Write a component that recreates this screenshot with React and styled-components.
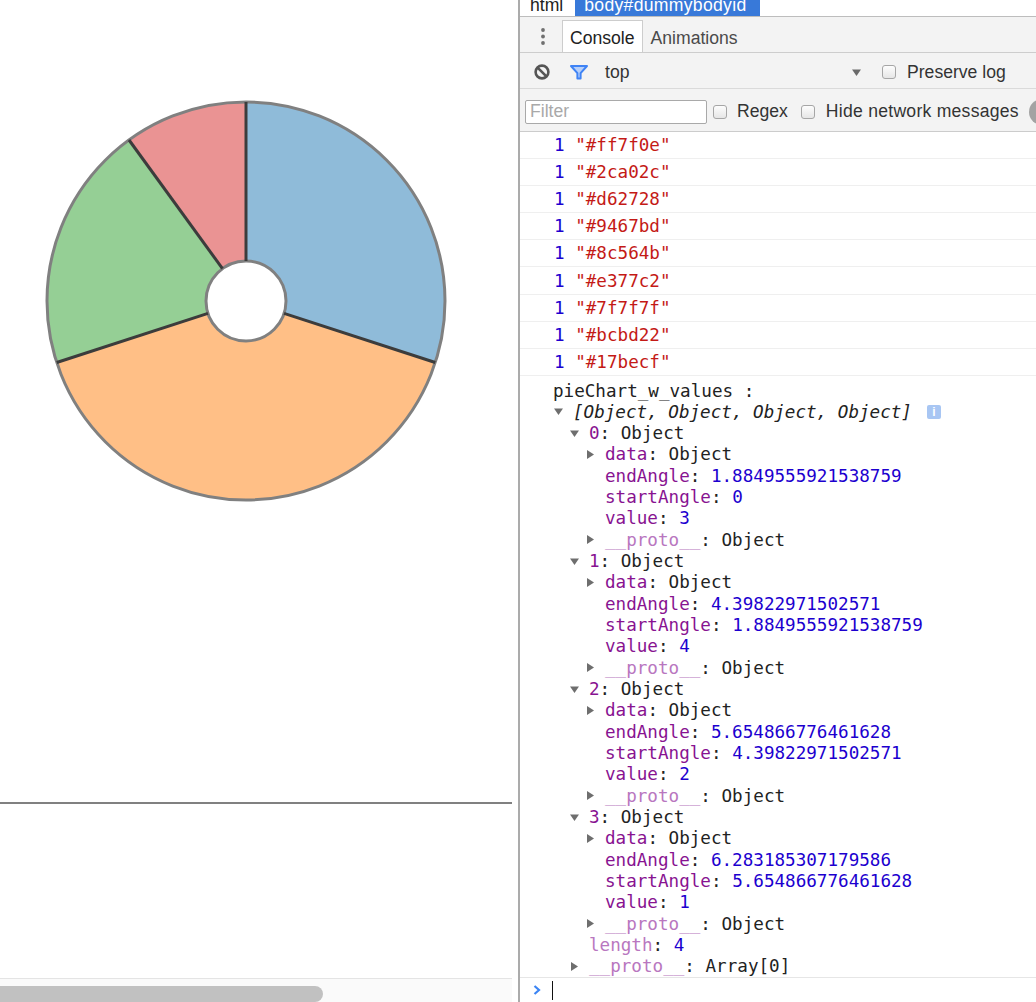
import React from 'react';
import styled, { createGlobalStyle } from 'styled-components';

const MONO = `"DejaVu Sans Mono", "Liberation Mono", monospace`;
const SANS = `"Liberation Sans", Arial, sans-serif`;

const GlobalStyle = createGlobalStyle`
  html, body {
    margin: 0;
    padding: 0;
    background: #fff;
    overflow: hidden;
  }
  body {
    font-family: ${SANS};
  }
`;

const Page = styled.div`
  display: flex;
  width: 1036px;
  height: 1002px;
  overflow: hidden;
`;

/* ---------- left: the page being inspected ---------- */

const LeftPane = styled.div`
  width: 518px;
  flex: none;
  display: flex;
  flex-direction: column;
`;

const ChartArea = styled.div`
  width: 512px;
  height: 802px;
  flex: none;
`;

const Rule = styled.div`
  width: 512px;
  height: 2px;
  background: #808080;
  flex: none;
`;

const Filler = styled.div`
  flex: 1;
`;

const HScroll = styled.div`
  width: 512px;
  height: 23px;
  border-top: 1px solid #e4e4e4;
  background: #fafafa;
  display: flex;
  align-items: flex-end;
  flex: none;
`;

const Thumb = styled.div`
  width: 323px;
  height: 16px;
  background: #c1c1c1;
  border-radius: 0 8px 8px 0;
`;

/* ---------- right: devtools ---------- */

const DevTools = styled.div`
  flex: 1;
  min-width: 0;
  border-left: 2px solid #ababab;
  display: flex;
  flex-direction: column;
  overflow: hidden;
  font-size: 17.6px;
  color: #222;
`;

const Crumbs = styled.div`
  height: 16px;
  border-bottom: 1px solid #bdbdbd;
  display: flex;
  align-items: flex-end;
  padding-left: 10px;
  overflow: hidden;
  flex: none;
`;

const Crumb = styled.span`
  height: 22px;
  line-height: 22px;
  flex: none;
  white-space: pre;
  padding: ${p => (p.$selected ? '0 13px 0 9px' : '0')};
  margin-left: ${p => (p.$selected ? '12px' : '0')};
  color: ${p => (p.$selected ? '#fff' : '#222')};
  background: ${p => (p.$selected ? '#3879d9' : 'transparent')};
  letter-spacing: ${p => (p.$selected ? '0.3px' : '0')};
`;

const TabBar = styled.div`
  height: 35px;
  background: #f3f3f3;
  border-bottom: 1px solid #cdcdcd;
  display: flex;
  align-items: flex-end;
  flex: none;
`;

const MenuButton = styled.div`
  width: 42px;
  height: 100%;
  box-sizing: border-box;
  padding: 3px 0 0 20px;
  display: flex;
  align-items: center;
`;

const Tab = styled.div`
  height: 32px;
  box-sizing: border-box;
  padding: 3px 7px 0;
  display: flex;
  align-items: center;
  border: 1px solid ${p => (p.$active ? '#cdcdcd' : 'transparent')};
  border-bottom: none;
  background: ${p => (p.$active ? '#fff' : 'transparent')};
  color: ${p => (p.$active ? '#222' : '#4a4a4a')};
`;

const Toolbar = styled.div`
  height: 36px;
  box-sizing: border-box;
  padding: 3px 0 0 13px;
  background: #f3f3f3;
  border-bottom: 1px solid #dadada;
  display: flex;
  align-items: center;
  flex: none;
  white-space: nowrap;
`;

const ContextSelect = styled.div`
  width: 256px;
  margin-left: 16px;
  display: flex;
  align-items: center;
  justify-content: space-between;
  color: #333;
`;

const FilterBar = styled.div`
  height: 43px;
  box-sizing: border-box;
  padding: 3px 0 0 5px;
  background: #f3f3f3;
  border-bottom: 1px solid #cccccc;
  display: flex;
  align-items: center;
  flex: none;
  white-space: nowrap;
`;

const FilterInput = styled.div`
  width: 182px;
  height: 24px;
  box-sizing: border-box;
  border: 1px solid #a9a9a9;
  border-radius: 2px;
  background: #fff;
  padding-left: 4px;
  display: flex;
  align-items: center;
  color: #a9a9a9;
  flex: none;
`;

const Checkbox = styled.span`
  width: 14px;
  height: 14px;
  box-sizing: border-box;
  flex: none;
  border: 1px solid #a6a6a6;
  border-radius: 3px;
  background: linear-gradient(#fdfdfd, #e6e6e6);
  margin-left: ${p => p.$gap}px;
`;

const Label = styled.span`
  margin-left: ${p => p.$gap || 11}px;
  color: #333;
  flex: none;
  letter-spacing: ${p => p.$spread || 0}px;
`;

const RoundButton = styled.span`
  width: 26px;
  height: 26px;
  border-radius: 50%;
  background: #a3a3a3;
  margin-left: 10px;
  flex: none;
  display: flex;
  align-items: center;
  justify-content: center;
  color: #fff;
  font-size: 15px;
  font-weight: bold;
`;

const Console = styled.div`
  flex: 1;
  display: flex;
  flex-direction: column;
  font-family: ${MONO};
  font-size: 17.6px;
  background: #fff;
  min-height: 0;
`;

const LogRow = styled.div`
  height: 26.1px;
  border-bottom: 1px solid #efefef;
  display: flex;
  align-items: center;
  padding-left: 34px;
  white-space: pre;
  flex: none;
`;

const TreeBlock = styled.div`
  padding-top: 4px;
  flex: none;
`;

const TreeLine = styled.div`
  height: 21.33px;
  display: flex;
  align-items: center;
  white-space: pre;
  padding-left: ${p => (p.$depth === 0 ? 33 : 34 + (p.$depth - 1) * 16)}px;
`;

const Twisty = styled.span`
  width: 19px;
  flex: none;
  display: flex;
  align-items: center;
`;

const Text = styled.span`
  color: ${p =>
    ({
      count: '#1c00cf',
      string: '#c41a16',
      number: '#1c00cf',
      key: '#881391',
      hidden: '#b977bf',
      plain: '#222',
    })[p.$kind || 'plain']};
  font-style: ${p => (p.$italic ? 'italic' : 'normal')};
`;

const InfoBadge = styled.span`
  width: 14px;
  height: 14px;
  margin-left: 15px;
  border-radius: 2px;
  background: #a8c6f3;
  color: #fff;
  font-family: ${SANS};
  font-size: 12px;
  font-weight: bold;
  display: flex;
  align-items: center;
  justify-content: center;
  flex: none;
`;

const Prompt = styled.div`
  flex: 1;
  border-top: 1px solid #e6e6e6;
  display: flex;
  align-items: center;
  padding-left: 13px;
`;

const Caret = styled.span`
  width: 1px;
  height: 19px;
  background: #111;
  margin-left: 11px;
`;

/* ---------- drawings ---------- */

const CX = 246;
const CY = 301;
const R = 199;
const R0 = 40;

const slices = [
  { start: 0, end: 1.8849555921538759, color: '#1f77b4' },
  { start: 1.8849555921538759, end: 4.39822971502571, color: '#ff7f0e' },
  { start: 4.39822971502571, end: 5.654866776461628, color: '#2ca02c' },
  { start: 5.654866776461628, end: 6.283185307179586, color: '#d62728' },
];

const px = (r, a) => CX + r * Math.sin(a);
const py = (r, a) => CY - r * Math.cos(a);
const pt = (r, a) => `${px(r, a).toFixed(2)} ${py(r, a).toFixed(2)}`;

function arcPath({ start, end }) {
  const large = end - start > Math.PI ? 1 : 0;
  return [
    `M ${pt(R, start)}`,
    `A ${R} ${R} 0 ${large} 1 ${pt(R, end)}`,
    `L ${pt(R0, end)}`,
    `A ${R0} ${R0} 0 ${large} 0 ${pt(R0, start)}`,
    'Z',
  ].join(' ');
}

function PieChart() {
  return (
    <svg width="512" height="802">
      {slices.map((s, i) => (
        <path key={i} d={arcPath(s)} fill={s.color} fillOpacity="0.5" />
      ))}
      <circle cx={CX} cy={CY} r={R} fill="none" stroke="#808080" strokeWidth="3" />
      <circle cx={CX} cy={CY} r={R0} fill="none" stroke="#808080" strokeWidth="3" />
      {slices.map((s, i) => (
        <line
          key={i}
          x1={px(R0, s.start)}
          y1={py(R0, s.start)}
          x2={px(R, s.start)}
          y2={py(R, s.start)}
          stroke="#3c3c3c"
          strokeWidth="3"
        />
      ))}
    </svg>
  );
}

const Dots = () => (
  <svg width="6" height="18">
    <circle cx="3" cy="3" r="1.9" fill="#6f6f6f" />
    <circle cx="3" cy="9.5" r="1.9" fill="#6f6f6f" />
    <circle cx="3" cy="16" r="1.9" fill="#6f6f6f" />
  </svg>
);

const ClearIcon = () => (
  <svg width="18" height="18">
    <circle cx="9" cy="9" r="6.4" fill="none" stroke="#555" strokeWidth="2.6" />
    <line x1="4.6" y1="4.6" x2="13.4" y2="13.4" stroke="#555" strokeWidth="2.6" />
  </svg>
);

const FunnelIcon = () => (
  <svg width="20" height="16" style={{ marginLeft: 18 }}>
    <path
      d="M2 2 H18 L11.6 9.2 V14.6 H8.4 V9.2 Z"
      fill="#b7d0fa"
      stroke="#3f83f5"
      strokeWidth="2"
      strokeLinejoin="round"
    />
  </svg>
);

const Triangle = ({ dir = 'down', color = '#6e6e6e' }) => (
  <svg width="9" height="9">
    {dir === 'down' ? (
      <polygon points="0,1.5 9,1.5 4.5,8" fill={color} />
    ) : (
      <polygon points="1,0 8,4.5 1,9" fill={color} />
    )}
  </svg>
);

const Chevron = () => (
  <svg width="8" height="10">
    <path d="M1.5 1 L6 5 L1.5 9" fill="none" stroke="#3c85f4" strokeWidth="2.2" />
  </svg>
);

/* ---------- data ---------- */

const colors = [
  '#ff7f0e', '#2ca02c', '#d62728', '#9467bd', '#8c564b',
  '#e377c2', '#7f7f7f', '#bcbd22', '#17becf',
];

const values = [
  { i: 0, end: '1.8849555921538759', start: '0', value: '3' },
  { i: 1, end: '4.39822971502571', start: '1.8849555921538759', value: '4' },
  { i: 2, end: '5.654866776461628', start: '4.39822971502571', value: '2' },
  { i: 3, end: '6.283185307179586', start: '5.654866776461628', value: '1' },
];

function Line({ depth, arrow, children }) {
  return (
    <TreeLine $depth={depth}>
      {depth > 0 && <Twisty>{arrow && <Triangle dir={arrow} />}</Twisty>}
      {children}
    </TreeLine>
  );
}

function ObjectEntry({ entry }) {
  return (
    <>
      <Line depth={2} arrow="down">
        <Text $kind="key">{entry.i}</Text>
        <Text>: Object</Text>
      </Line>
      <Line depth={3} arrow="right">
        <Text $kind="key">data</Text>
        <Text>: Object</Text>
      </Line>
      <Line depth={3}>
        <Text $kind="key">endAngle</Text>
        <Text>: </Text>
        <Text $kind="number">{entry.end}</Text>
      </Line>
      <Line depth={3}>
        <Text $kind="key">startAngle</Text>
        <Text>: </Text>
        <Text $kind="number">{entry.start}</Text>
      </Line>
      <Line depth={3}>
        <Text $kind="key">value</Text>
        <Text>: </Text>
        <Text $kind="number">{entry.value}</Text>
      </Line>
      <Line depth={3} arrow="right">
        <Text $kind="hidden">__proto__</Text>
        <Text>: Object</Text>
      </Line>
    </>
  );
}

export default function App() {
  return (
    <Page>
      <GlobalStyle />
      <LeftPane>
        <ChartArea>
          <PieChart />
        </ChartArea>
        <Rule />
        <Filler />
        <HScroll>
          <Thumb />
        </HScroll>
      </LeftPane>

      <DevTools>
        <Crumbs>
          <Crumb>html</Crumb>
          <Crumb $selected>body#dummybodyid</Crumb>
        </Crumbs>

        <TabBar>
          <MenuButton>
            <Dots />
          </MenuButton>
          <Tab $active>Console</Tab>
          <Tab>Animations</Tab>
        </TabBar>

        <Toolbar>
          <ClearIcon />
          <FunnelIcon />
          <ContextSelect>
            <span>top</span>
            <Triangle dir="down" color="#6a6a6a" />
          </ContextSelect>
          <Checkbox $gap={21} />
          <Label>Preserve log</Label>
        </Toolbar>

        <FilterBar>
          <FilterInput>Filter</FilterInput>
          <Checkbox $gap={6} />
          <Label $gap={10}>Regex</Label>
          <Checkbox $gap={13} />
          <Label $spread={0.25}>Hide network messages</Label>
          <RoundButton>A</RoundButton>
        </FilterBar>

        <Console>
          {colors.map(c => (
            <LogRow key={c}>
              <Text $kind="count">1 </Text>
              <Text $kind="string">"{c}"</Text>
            </LogRow>
          ))}

          <TreeBlock>
            <Line depth={0}>
              <Text>pieChart_w_values :</Text>
            </Line>
            <Line depth={1} arrow="down">
              <Text $italic>[Object, Object, Object, Object]</Text>
              <InfoBadge>i</InfoBadge>
            </Line>
            {values.map(v => (
              <ObjectEntry key={v.i} entry={v} />
            ))}
            <Line depth={2}>
              <Text $kind="hidden">length</Text>
              <Text>: </Text>
              <Text $kind="number">4</Text>
            </Line>
            <Line depth={2} arrow="right">
              <Text $kind="hidden">__proto__</Text>
              <Text>: Array[0]</Text>
            </Line>
          </TreeBlock>

          <Prompt>
            <Chevron />
            <Caret />
          </Prompt>
        </Console>
      </DevTools>
    </Page>
  );
}
